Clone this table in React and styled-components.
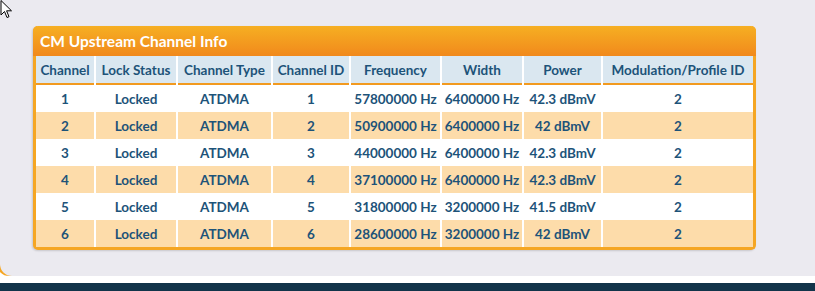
import React from 'react'
import styled, { createGlobalStyle } from 'styled-components'

const Global = createGlobalStyle`
body {
  margin: 0;
  background: #ffffff;
  font-family: Lato, "Open Sans", sans-serif;
}
`
const Page = styled.div`
position: relative;
width: 815px;
height: 291px;
overflow: hidden;
display: flex;
flex-direction: column;
`
const Panel = styled.div`
height: 276px;
box-sizing: border-box;
padding: 26px 0 0 33px;
background: #ebeaf0;
border-bottom-left-radius: 12px;
box-shadow: -3px 0 0 #f5a623;
`
const Gap = styled.div`
height: 7px;
background: #ffffff;
`
const Footer = styled.div`
flex: 1;
background: #12344a;
`
const Card = styled.div`
width: 723px;
box-sizing: border-box;
background: #ffffff;
border: 3px solid #f5a623;
border-top: none;
border-radius: 5px;
box-shadow: -1px 1px 2px rgba(0,0,0,0.15);
`
const Title = styled.div`
height: 30px;
margin: 0 -3px;
padding-left: 7px;
display: flex;
align-items: center;
border-radius: 5px 5px 0 0;
background: linear-gradient(#f6af22, #f1891c);
color: #ffffff;
font-weight: 700;
font-size: 15.5px;
`
const Table = styled.table`
width: calc(100% + 4px);
margin: 0 -2px;
border-collapse: separate;
border-spacing: 2px 0;
table-layout: fixed;
`
const Th = styled.th`
height: 27px;
padding: 0;
background: #dae7f0;
border-bottom: 2px solid #f29a1f;
color: #1d5379;
font-weight: 700;
font-size: 13.5px;
white-space: nowrap;
text-align: center;
`
const Row = styled.tr`
background: ${p => (p.$odd ? '#fddcaa' : '#ffffff')};
`
const Td = styled.td`
height: 27px;
padding: 0;
color: #1d5379;
font-weight: 700;
font-size: 13.5px;
white-space: nowrap;
text-align: center;
`
const Cursor = styled.svg`
position: absolute;
left: 0;
top: 0;
`

const widths = [58, 80, 93, 76, 89, 80, 77, 150]
const heads = ['Channel', 'Lock Status', 'Channel Type', 'Channel ID', 'Frequency', 'Width', 'Power', 'Modulation/Profile ID']
const rows = [
  ['1', 'Locked', 'ATDMA', '1', '57800000 Hz', '6400000 Hz', '42.3 dBmV', '2'],
  ['2', 'Locked', 'ATDMA', '2', '50900000 Hz', '6400000 Hz', '42 dBmV', '2'],
  ['3', 'Locked', 'ATDMA', '3', '44000000 Hz', '6400000 Hz', '42.3 dBmV', '2'],
  ['4', 'Locked', 'ATDMA', '4', '37100000 Hz', '6400000 Hz', '42.3 dBmV', '2'],
  ['5', 'Locked', 'ATDMA', '5', '31800000 Hz', '3200000 Hz', '41.5 dBmV', '2'],
  ['6', 'Locked', 'ATDMA', '6', '28600000 Hz', '3200000 Hz', '42 dBmV', '2'],
]

export default function App() {
  return (
    <Page>
      <Global />
      <Panel>
        <Card>
          <Title>CM Upstream Channel Info</Title>
          <Table>
            <colgroup>
              {widths.map((w, i) => <col key={i} style={{ width: w }} />)}
            </colgroup>
            <thead>
              <tr>
                {heads.map(h => <Th key={h}>{h}</Th>)}
              </tr>
            </thead>
            <tbody>
              {rows.map((r, i) => (
                <Row key={i} $odd={i % 2 === 1}>
                  {r.map((c, j) => <Td key={j}>{c}</Td>)}
                </Row>
              ))}
            </tbody>
          </Table>
        </Card>
      </Panel>
      <Gap />
      <Footer />
      <Cursor width="14" height="20" viewBox="0 0 14 20">
        <path d="M1 0.5 L1 15 L4.5 11.5 L7 17.5 L9 16.7 L6.6 10.8 L11.5 10.8 Z" fill="#ffffff" stroke="#000000" strokeWidth="1" />
      </Cursor>
    </Page>
  )
}
